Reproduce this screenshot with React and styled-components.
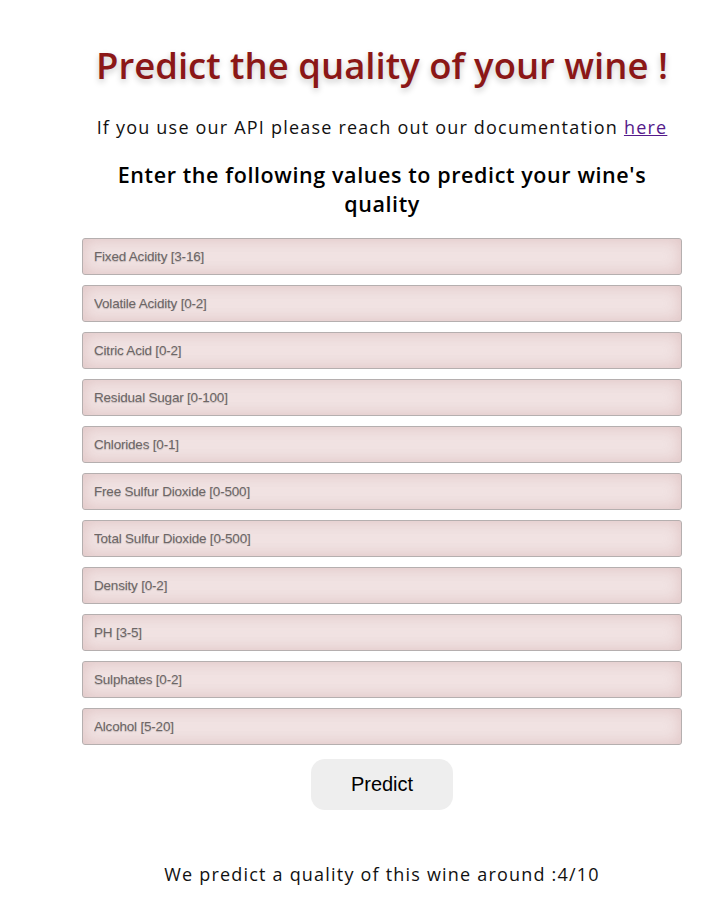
import React from "react";
import styled, { createGlobalStyle } from "styled-components";

const GlobalStyle = createGlobalStyle`
   body {
      margin: 0;
      background: #ffffff;
      font-family: "Open Sans", sans-serif;
   }
`;

const Page = styled.div`
   width: 600px;
   padding: 40px 0 0 82px;
   display: flex;
   flex-direction: column;
   align-items: center;
`;

const Title = styled.h1`
   margin: 0;
   font-size: 36.5px;
   font-weight: 600;
   color: #8b1717;
   text-shadow: 0 3px 6px rgba(0, 0, 0, 0.22);
   white-space: nowrap;
`;

const Intro = styled.p`
   margin: 25px 0 0;
   font-size: 18px;
   letter-spacing: 1.2px;
   color: #111;
   white-space: nowrap;

   a {
      color: #551a8b;
   }
`;

const Heading = styled.h3`
   margin: 21px 0 0;
   width: 580px;
   text-align: center;
   font-size: 21.5px;
   font-weight: 600;
   line-height: 29px;
   letter-spacing: 0.6px;
   color: #000;
`;

const Form = styled.form`
   margin-top: 20px;
   width: 100%;
   display: flex;
   flex-direction: column;
   gap: 10px;
   align-items: center;
`;

const Field = styled.input`
   box-sizing: border-box;
   width: 100%;
   height: 37px;
   padding: 0 11px;
   border: 1px solid #b5afaf;
   border-radius: 3px;
   background: #f1e3e3;
   box-shadow: inset 0 0 16px rgba(195, 145, 145, 0.4);
   font-family: "Liberation Sans", Arial, sans-serif;
   font-size: 13.5px;
   letter-spacing: -0.2px;
   outline: none;

   &::placeholder {
      color: #6c6666;
      text-shadow: 0 1px 1px rgba(0, 0, 0, 0.2);
   }
`;

const PredictButton = styled.button`
   margin-top: 4px;
   width: 142px;
   height: 51px;
   border: none;
   border-radius: 14px;
   background: #eeeeee;
   font-family: "Liberation Sans", Arial, sans-serif;
   font-size: 20px;
   color: #000;
   cursor: pointer;
`;

const Result = styled.p`
   margin: 52px 0 0;
   font-size: 18px;
   letter-spacing: 1.2px;
   color: #111;
`;

const fields = [
   "Fixed Acidity [3-16]",
   "Volatile Acidity [0-2]",
   "Citric Acid [0-2]",
   "Residual Sugar [0-100]",
   "Chlorides [0-1]",
   "Free Sulfur Dioxide [0-500]",
   "Total Sulfur Dioxide [0-500]",
   "Density [0-2]",
   "PH [3-5]",
   "Sulphates [0-2]",
   "Alcohol [5-20]"
];

export default function App() {
   return (
      <>
         <GlobalStyle />
         <Page>
            <Title>Predict the quality of your wine !</Title>
            <Intro>
               If you use our API please reach out our documentation{" "}
               <a href="#docs">here</a>
            </Intro>
            <Heading>Enter the following values to predict your wine's quality</Heading>
            <Form onSubmit={e => e.preventDefault()}>
               {fields.map(name => (
                  <Field key={name} type="text" placeholder={name} />
               ))}
               <PredictButton type="submit">Predict</PredictButton>
            </Form>
            <Result>We predict a quality of this wine around :4/10</Result>
         </Page>
      </>
   );
}
